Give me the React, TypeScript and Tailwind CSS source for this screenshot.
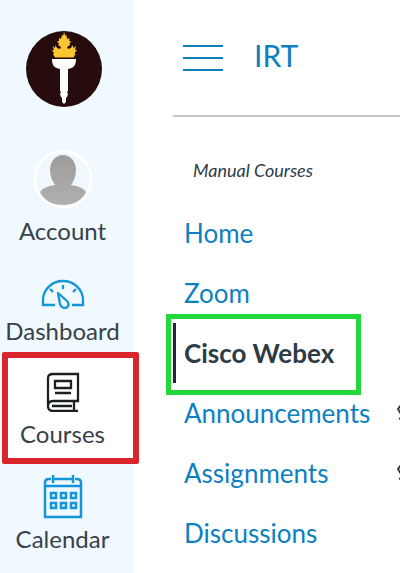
import type { ReactNode } from "react";

const TorchLogo = () => (
  <svg viewBox="0 0 76 76" className="h-[76px] w-[76px]" aria-hidden="true">
    <circle cx="38" cy="38" r="38" fill="#260c0c" />
    <path
      fill="#fbc62f"
      d="M29 26.500L27 23L28 22L26 19L28 19L26.500 15L29 17L29.500 14L31 17L34 18L35 16L32 14L33 13L31 10L33 10L33 7L35 8L36 4L37 5L38 1L39.500 5L40.500 4L41 8L43.500 7L43 10L45 10L43.500 13L44 14L41 16L42 18L45 17L46.500 14L47.500 17L50 15L49 19L51 19L48.500 22L49.500 23L47.500 26.500Z"
    />
    <path
      fill="#fff"
      d="M26 28h24c0 6-2 9-8 10v22l-1 1 1 2-1 3-1 1v4l-2 2-2-2v-4l-1-1-1-3 1-2-1-1V38c-6-1-8-4-8-10z"
    />
  </svg>
);

const Avatar = () => (
  <svg viewBox="0 0 60 60" className="h-[60px] w-[60px]" aria-hidden="true">
    <defs>
      <linearGradient id="person" x1="0" y1="0" x2="0" y2="1">
        <stop offset="0" stopColor="#9d9d9d" />
        <stop offset="1" stopColor="#b0b0b0" />
      </linearGradient>
    </defs>
    <circle cx="30" cy="30" r="28" fill="#f0f8fd" stroke="#fff" strokeWidth="3" />
    <path
      fill="url(#person)"
      d="M30 6c8 0 13 7 13 15 0 6-2 11-5 15 7 1 12 3 15 7-4 9-13 13-23 13S11 52 7 43c3-4 8-6 15-7-3-4-5-9-5-15 0-8 5-15 13-15z"
    />
  </svg>
);

const DashboardIcon = () => (
  <svg
    viewBox="0 0 44 30"
    className="h-[30px] w-11"
    fill="none"
    stroke="#1395d8"
    strokeWidth="2.3"
    aria-hidden="true"
  >
    <path d="M14 26H2v-5a20 19 0 0 1 40 0v5H31" />
    <path d="M22 6v4M9 10l3 3M35 10l-3 3" />
    <path d="M17 14l9 8c3 3 1 7-2 7-3 0-4-1-5-4z" strokeLinejoin="round" />
  </svg>
);

const CoursesIcon = () => (
  <svg
    viewBox="0 0 34 40"
    className="h-10 w-[34px]"
    fill="none"
    stroke="#1d2022"
    strokeWidth="2.3"
    aria-hidden="true"
  >
    <path d="M2 34V6q0-4 5-4h25v27H7q-5 0-5 5t5 5h25M28 29v10M6 34h20" />
    <path d="M9 9h16v7H9zM9 21h16" />
  </svg>
);

const CalendarIcon = () => (
  <svg
    viewBox="0 0 40 44"
    className="h-11 w-10"
    fill="none"
    stroke="#1395d8"
    strokeWidth="2.5"
    aria-hidden="true"
  >
    <path d="M8 4H6Q2 4 2 8v34h36V8q0-4-4-4h-2M11 4h18M2 11h36M10 0v8M30 0v8" />
    <path d="M8 18h5v5H8zM18 18h5v5h-5zM28 18h5v5h-5zM8 28h5v5H8zM18 28h5v5h-5zM28 28h5v5h-5z" />
  </svg>
);

const HiddenIcon = () => (
  <svg
    viewBox="0 0 3 20"
    className="h-5 w-[3px]"
    fill="none"
    stroke="#2d3b45"
    strokeWidth="2"
    aria-hidden="true"
  >
    <path d="M4 2L1 6l3 5M2 16l2-1" />
  </svg>
);

type SidebarItemProps = {
  label: string;
  icon: ReactNode;
  className?: string;
};

const SidebarItem = ({ label, icon, className }: SidebarItemProps) => (
  <a
    href="#"
    className={`flex flex-col items-center pr-2 text-2xl leading-8 text-[#394148] ${className ?? ""}`}
  >
    {icon}
    <span>{label}</span>
  </a>
);

const courseLinks = [
  { label: "Home" },
  { label: "Zoom" },
  { label: "Cisco Webex", active: true },
  { label: "Announcements", hidden: true },
  { label: "Assignments", hidden: true },
  { label: "Discussions" },
];

const App = () => (
  <div className="flex min-h-screen overflow-hidden bg-white font-['Lato',sans-serif]">
    <nav aria-label="Global" className="w-[133px] shrink-0 bg-[#eff9ff]">
      <a href="#" aria-label="Home page" className="flex justify-center pt-[31px] pr-1.5">
        <TorchLogo />
      </a>
      <SidebarItem label="Account" icon={<Avatar />} className="gap-1.5 pt-[42px]" />
      <SidebarItem label="Dashboard" icon={<DashboardIcon />} className="gap-1.5 pt-8" />
      <div className="relative mt-[5px]">
        <div className="absolute inset-y-0 -right-1.5 left-0.5 rounded-xs border-6 border-[#da252c] bg-white" />
        <SidebarItem
          label="Courses"
          icon={<CoursesIcon />}
          className="relative gap-1.5 pt-5 pb-3.5"
        />
      </div>
      <SidebarItem label="Calendar" icon={<CalendarIcon />} className="gap-1 pt-[11px]" />
    </nav>

    <main className="min-w-0 flex-1 pl-10">
      <header className="flex h-[117px] items-start gap-[31px] border-b-2 border-[#c3cacd] pt-[35px] pl-2.5">
        <button type="button" aria-label="Course menu" className="flex flex-col gap-2.5 pt-2.5">
          <span className="h-0.5 w-10 bg-[#0c80c1]" />
          <span className="h-0.5 w-10 bg-[#0c80c1]" />
          <span className="h-0.5 w-10 bg-[#0c80c1]" />
        </button>
        <a href="#" className="text-[30px] leading-10 text-[#0c80c1]">
          IRT
        </a>
      </header>

      <p className="pt-[39px] pb-[19px] pl-5 text-lg leading-7 text-[#2d3b45] italic">
        Manual Courses
      </p>

      <nav aria-label="Course">
        <ul>
          {courseLinks.map(({ label, active, hidden }) => (
            <li key={label} className="relative flex h-[60px] items-center justify-between">
              <a
                href="#"
                aria-current={active ? "page" : undefined}
                className={
                  active
                    ? "flex h-full items-center border-l-3 border-[#1d2a35] pl-2 text-[26px] font-bold text-[#2d3b45]"
                    : "pl-[11px] text-[26px] text-[#0c80c1]"
                }
              >
                {label}
              </a>
              {hidden && <HiddenIcon />}
              {active && (
                <div className="pointer-events-none absolute -top-[9px] -bottom-3 -left-[7px] w-[195px] border-5 border-[#22d83a]" />
              )}
            </li>
          ))}
        </ul>
      </nav>
    </main>
  </div>
);

export default App;
